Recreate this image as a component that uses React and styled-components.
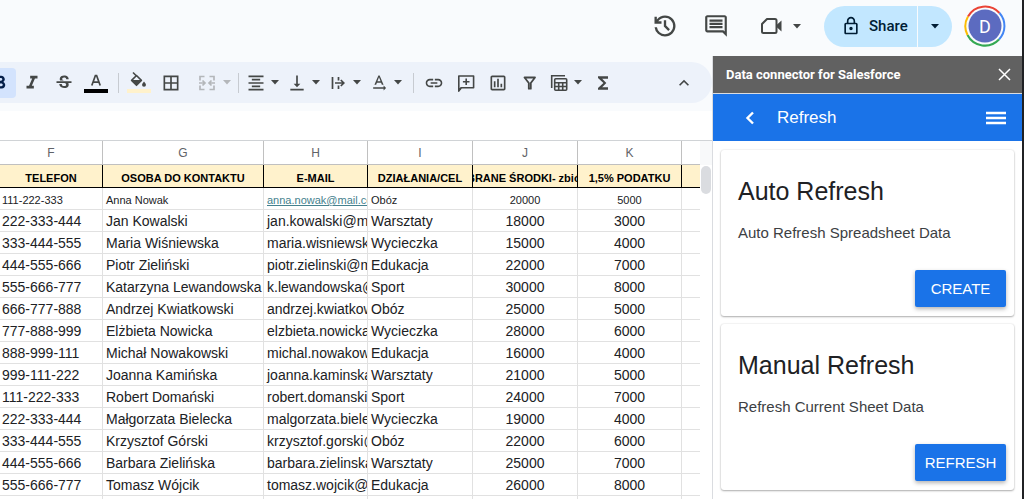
import styled, { createGlobalStyle } from 'styled-components';
import {
  MdBorderAll,
  MdFormatAlignCenter,
  MdFormatBold,
  MdFormatItalic,
  MdFunctions,
  MdKeyboardArrowUp,
  MdLink,
  MdOutlineInsertChartOutlined,
  MdOutlineInsertComment,
  MdOutlineLock,
  MdStrikethroughS,
  MdTextRotationNone,
  MdVerticalAlignBottom,
} from 'react-icons/md';

const columns = [
  { letter: 'F', title: 'TELEFON', width: 103 },
  { letter: 'G', title: 'OSOBA DO KONTAKTU', width: 161 },
  { letter: 'H', title: 'E-MAIL', width: 104 },
  { letter: 'I', title: 'DZIAŁANIA/CEL', width: 105 },
  { letter: 'J', title: 'ZEBRANE ŚRODKI- zbiórka', width: 105 },
  { letter: 'K', title: '1,5% PODATKU', width: 104 },
  { letter: '', title: '' },
];

const rows = [
  ['111-222-333', 'Anna Nowak', 'anna.nowak@mail.com', 'Obóz', 20000, 5000],
  ['222-333-444', 'Jan Kowalski', 'jan.kowalski@mail.com', 'Warsztaty', 18000, 3000],
  ['333-444-555', 'Maria Wiśniewska', 'maria.wisniewska@mail.com', 'Wycieczka', 15000, 4000],
  ['444-555-666', 'Piotr Zieliński', 'piotr.zielinski@mail.com', 'Edukacja', 22000, 7000],
  ['555-666-777', 'Katarzyna Lewandowska', 'k.lewandowska@mail.com', 'Sport', 30000, 8000],
  ['666-777-888', 'Andrzej Kwiatkowski', 'andrzej.kwiatkowski@mail.com', 'Obóz', 25000, 5000],
  ['777-888-999', 'Elżbieta Nowicka', 'elzbieta.nowicka@mail.com', 'Wycieczka', 28000, 6000],
  ['888-999-111', 'Michał Nowakowski', 'michal.nowakowski@mail.com', 'Edukacja', 16000, 4000],
  ['999-111-222', 'Joanna Kamińska', 'joanna.kaminska@mail.com', 'Warsztaty', 21000, 5000],
  ['111-222-333', 'Robert Domański', 'robert.domanski@mail.com', 'Sport', 24000, 7000],
  ['222-333-444', 'Małgorzata Bielecka', 'malgorzata.bielecka@mail.com', 'Wycieczka', 19000, 4000],
  ['333-444-555', 'Krzysztof Górski', 'krzysztof.gorski@mail.com', 'Obóz', 22000, 6000],
  ['444-555-666', 'Barbara Zielińska', 'barbara.zielinska@mail.com', 'Warsztaty', 25000, 7000],
  ['555-666-777', 'Tomasz Wójcik', 'tomasz.wojcik@mail.com', 'Edukacja', 26000, 8000],
  ['', '', '', '', '', ''],
];

const HistoryIcon = () => (
  <svg width="28" height="28" viewBox="0 -960 960 960" fill="currentColor">
    <path d="M480-120q-138 0-240.5-91.5T122-440h82q14 104 92.5 172T480-200q117 0 198.5-81.5T760-480q0-117-81.5-198.5T480-760q-69 0-129 32t-101 88h110v80H120v-240h80v94q51-64 124.5-99T480-840q75 0 140.5 28.5t114 77q48.5 48.5 77 114T840-480q0 75-28.5 140.5t-77 114q-48.5 48.5-114 77T480-120Zm112-192L440-464v-216h80v184l128 128-56 56Z" />
  </svg>
);

const MeetIcon = () => (
  <svg width="22" height="18" viewBox="0 0 22 18" fill="none">
    <path
      d="M7 2h8q1.500 0 1.500 1.500v11q0 1.500-1.500 1.500H3.500Q2 16 2 14.500V7z"
      stroke="currentColor"
      strokeWidth="2"
      strokeLinejoin="round"
    />
    <path d="M16 8.500l5.500-5v11l-5.500-5z" fill="currentColor" />
  </svg>
);

const TextColorIcon = () => (
  <svg width="24" height="24" viewBox="0 0 24 24">
    <path
      d="M7.800 14.500L11.400 4.500h1.200l3.600 10M9.200 11.200h5.600"
      fill="none"
      stroke="currentColor"
      strokeWidth="1.700"
    />
    <rect y="18" width="24" height="4" fill="#000" />
  </svg>
);

const FillColorIcon = () => (
  <svg width="24" height="24" viewBox="0 0 24 24">
    <path d="M6 1.500l3.500 3.500" stroke="currentColor" strokeWidth="1.600" />
    <path
      d="M9.500 4.500L4.600 9.400l4.900 4.900 4.900-4.900z"
      fill="none"
      stroke="currentColor"
      strokeWidth="1.600"
      strokeLinejoin="round"
    />
    <path d="M4.600 9h9.800l-4.900 5.300z" fill="currentColor" />
    <path d="M17 10.500q2 2.300 2 3.300a2 2 0 0 1-4 0q0-1 2-3.300z" fill="currentColor" />
    <rect y="18" width="24" height="4" fill="#fff2cc" />
  </svg>
);

const MergeIcon = () => (
  <svg width="24" height="24" viewBox="0 0 24 24" fill="none" stroke="currentColor" strokeWidth="1.700">
    <path d="M9.500 5.500H5v4M5 14.500v4h4.500M14.500 5.500H19v4M19 14.500v4h-4.500" />
    <path d="M4 12h6M7.500 9.500L10 12l-2.500 2.500M20 12h-6M16.500 9.500L14 12l2.500 2.500" />
  </svg>
);

const OverflowIcon = () => (
  <svg width="24" height="24" viewBox="0 0 24 24" fill="none" stroke="currentColor" strokeWidth="1.700">
    <path d="M6.500 6v12M12.500 6v3.500M12.500 14.500V18M9 12h8.500M14.800 9l3 3-3 3" />
  </svg>
);

const CommentPlusIcon = () => (
  <svg width="24" height="24" viewBox="0 0 24 24" fill="none" stroke="currentColor" strokeWidth="1.600">
    <path d="M4.800 20V5h14.800v11.800H7z" strokeLinejoin="round" />
    <path d="M4 17.500h4L4 21z" fill="currentColor" stroke="none" />
    <path d="M12.200 7.500v6.600M8.900 10.800h6.600" />
  </svg>
);

const FilterIcon = () => (
  <svg width="24" height="24" viewBox="0 0 24 24" fill="none" stroke="currentColor" strokeWidth="1.800">
    <path d="M6.500 6.500h10.500l-4.200 5.500v5.700h-2V12z" strokeLinejoin="round" />
  </svg>
);

const TableViewsIcon = () => (
  <svg width="24" height="24" viewBox="0 0 24 24" fill="none" stroke="currentColor" strokeWidth="1.600">
    <path d="M4.700 17V4.800H18" />
    <rect x="7.700" y="7.800" width="12" height="11.500" rx="1" />
    <path d="M7.700 11.800h12M7.700 15.500h12M11.700 11.800v7.500M15.700 11.800v7.500" />
  </svg>
);

const Caret = () => (
  <CaretSvg viewBox="0 0 10 5">
    <path d="M1 0h8L5 4.500z" fill="currentColor" />
  </CaretSvg>
);

const AvatarRing = () => (
  <svg width="42" height="42" viewBox="0 0 42 42" fill="none" strokeWidth="2">
    <path d="M4 11.500A19.500 19.500 0 0 1 35.500 8" stroke="#ea4335" />
    <path d="M35.500 8A19.500 19.500 0 0 1 35 34.500" stroke="#4285f4" />
    <path d="M35 34.500A19.500 19.500 0 0 1 3.500 30" stroke="#34a853" />
    <path d="M3.500 30A19.500 19.500 0 0 1 4 11.500" stroke="#fbbc04" />
    <circle cx="21" cy="21" r="16.500" fill="#5c6bc0" />
  </svg>
);

const MenuButton = ({ label, icon, wide, disabled }) => (
  <DropButton type="button" aria-label={label} $wide={wide} disabled={disabled}>
    {icon}
    <Caret />
  </DropButton>
);

const Toolbar = () => (
  <ToolbarArea role="toolbar">
    <BoldButton type="button" aria-label="Bold">
      <MdFormatBold size={22} />
    </BoldButton>
    <ToolButton type="button" aria-label="Italic">
      <MdFormatItalic size={22} />
    </ToolButton>
    <ToolButton type="button" aria-label="Strikethrough">
      <MdStrikethroughS size={20} />
    </ToolButton>
    <ToolButton type="button" aria-label="Text color">
      <TextColorIcon />
    </ToolButton>
    <Divider />
    <ToolButton type="button" aria-label="Fill color">
      <FillColorIcon />
    </ToolButton>
    <ToolButton type="button" aria-label="Borders">
      <MdBorderAll size={20} />
    </ToolButton>
    <MenuButton label="Merge cells" icon={<MergeIcon />} wide disabled />
    <Divider />
    <MenuButton label="Horizontal align" icon={<MdFormatAlignCenter size={20} />} />
    <MenuButton label="Vertical align" icon={<MdVerticalAlignBottom size={20} />} />
    <MenuButton label="Text wrapping" icon={<OverflowIcon />} />
    <MenuButton label="Text rotation" icon={<MdTextRotationNone size={20} />} />
    <Divider />
    <ToolButton type="button" aria-label="Insert link">
      <MdLink size={20} />
    </ToolButton>
    <ToolButton type="button" aria-label="Insert comment">
      <CommentPlusIcon />
    </ToolButton>
    <ToolButton type="button" aria-label="Insert chart">
      <MdOutlineInsertChartOutlined size={20} />
    </ToolButton>
    <ToolButton type="button" aria-label="Create a filter">
      <FilterIcon />
    </ToolButton>
    <MenuButton label="Table views" icon={<TableViewsIcon />} />
    <ToolButton type="button" aria-label="Functions">
      <MdFunctions size={20} />
    </ToolButton>
    <CollapseButton type="button" aria-label="Hide the menus">
      <MdKeyboardArrowUp size={20} />
    </CollapseButton>
  </ToolbarArea>
);

const Sheet = () => (
  <SheetArea>
    <GridPane>
      <Grid>
        <colgroup>
          {columns.map((column) => (
            <Col key={column.letter} $width={column.width} />
          ))}
        </colgroup>
        <thead>
          <tr>
            {columns.map((column) => (
              <Letter key={column.letter}>{column.letter}</Letter>
            ))}
          </tr>
          <tr>
            {columns.map((column) => (
              <Title key={column.letter}>
                <TitleText>
                  <span>{column.title}</span>
                </TitleText>
              </Title>
            ))}
          </tr>
        </thead>
        <tbody>
          {rows.map((row, index) => (
            <tr key={index}>
              {row.map((value, i) => (
                <Cell key={i} $small={index === 0} $center={i > 3}>
                  {index === 0 && i === 2 ? (
                    <MailLink href={`mailto:${value}`}>{value}</MailLink>
                  ) : (
                    value
                  )}
                </Cell>
              ))}
              <Cell />
            </tr>
          ))}
        </tbody>
      </Grid>
    </GridPane>
    <ScrollTrack>
      <ScrollCorner />
      <ScrollThumb />
    </ScrollTrack>
  </SheetArea>
);

const ActionCard = ({ title, text, action }) => (
  <Card>
    <CardTitle>{title}</CardTitle>
    <CardText>{text}</CardText>
    <CardButton type="button">{action}</CardButton>
  </Card>
);

const App = () => (
  <Page>
    <GlobalStyle />
    <TopBar>
      <IconButton type="button" aria-label="Version history">
        <HistoryIcon />
      </IconButton>
      <IconButton type="button" aria-label="Comments">
        <MdOutlineInsertComment size={26} />
      </IconButton>
      <MeetButton type="button" aria-label="Meet">
        <MeetIcon />
        <Caret />
      </MeetButton>
      <ShareGroup>
        <ShareButton type="button">
          <MdOutlineLock size={20} />
          Share
        </ShareButton>
        <ShareMore type="button" aria-label="Share options">
          <Caret />
        </ShareMore>
      </ShareGroup>
      <Account type="button" aria-label="Account">
        <AvatarRing />
        <Initial>D</Initial>
      </Account>
    </TopBar>
    <Body>
      <Main>
        <Toolbar />
        <FormulaBar />
        <Sheet />
      </Main>
      <Sidebar>
        <SidebarHeader>
          Data connector for Salesforce
          <PlainButton type="button" aria-label="Close">
            <svg width="13" height="13" viewBox="0 0 13 13" stroke="currentColor" strokeWidth="1.500">
              <path d="M1 1l11 11M12 1L1 12" />
            </svg>
          </PlainButton>
        </SidebarHeader>
        <SidebarNav>
          <PlainButton type="button" aria-label="Back">
            <svg width="10" height="14" viewBox="0 0 10 14" fill="none" stroke="currentColor" strokeWidth="2.400">
              <path d="M8 1.500L2.500 7 8 12.500" />
            </svg>
          </PlainButton>
          <NavTitle>Refresh</NavTitle>
          <PlainButton type="button" aria-label="Menu">
            <svg width="20" height="14" viewBox="0 0 20 14" stroke="currentColor" strokeWidth="2.400">
              <path d="M0 2h20M0 7h20M0 12h20" />
            </svg>
          </PlainButton>
        </SidebarNav>
        <Cards>
          <ActionCard title="Auto Refresh" text="Auto Refresh Spreadsheet Data" action="CREATE" />
          <ActionCard title="Manual Refresh" text="Refresh Current Sheet Data" action="REFRESH" />
        </Cards>
      </Sidebar>
    </Body>
  </Page>
);

export default App;

const GlobalStyle = createGlobalStyle`
  * {
    box-sizing: border-box;
  }
  body {
    margin: 0;
    font-family: 'Liberation Sans', Arial, sans-serif;
    color: #202124;
  }
  button {
    font: inherit;
    color: inherit;
    background: none;
    border: none;
    padding: 0;
    cursor: pointer;
  }
`;

const Page = styled.div`
  height: 100vh;
  display: flex;
  flex-direction: column;
  overflow: hidden;
  background-color: #f9fbfd;
  border-right: 2px solid #202124;
`;

const TopBar = styled.header`
  flex: none;
  height: 56px;
  padding: 0 16px 4px 0;
  display: flex;
  align-items: center;
  justify-content: flex-end;
  color: #444746;
`;

const IconButton = styled.button`
  height: 32px;
  margin-right: 24px;
  display: flex;
  align-items: center;
`;

const MeetButton = styled(IconButton)`
  gap: 10px;
  margin-right: 22px;
  padding-left: 7px;
`;

const CaretSvg = styled.svg`
  flex: none;
  width: 10px;
  height: 5px;
`;

const ShareGroup = styled.div`
  display: flex;
  gap: 1px;
  height: 41px;
  margin-right: 12px;
  border-radius: 21px;
  overflow: hidden;
  color: #001d35;
`;

const ShareButton = styled.button`
  width: 93px;
  display: flex;
  align-items: center;
  gap: 8px;
  padding-left: 17px;
  background-color: #c2e7ff;
  font-family: Roboto, sans-serif;
  font-size: 15px;
  font-weight: 500;
`;

const ShareMore = styled.button`
  width: 34px;
  display: flex;
  align-items: center;
  justify-content: center;
  background-color: #c2e7ff;
`;

const Account = styled.button`
  display: grid;
  place-items: center;

  > * {
    grid-area: 1 / 1;
  }
`;

const Initial = styled.span`
  color: #fff;
  font-family: Roboto, sans-serif;
  font-size: 18px;
`;

const Body = styled.div`
  flex: 1;
  min-height: 0;
  display: flex;
`;

const Main = styled.main`
  flex: 1;
  min-width: 0;
  display: flex;
  flex-direction: column;
  padding-top: 6px;
  overflow: hidden;
`;

const ToolbarArea = styled.div`
  flex: none;
  display: flex;
  align-items: center;
  height: 41px;
  border-radius: 0 21px 21px 0;
  background-color: #edf2fa;
  color: #444746;
`;

const ToolButton = styled.button`
  flex: none;
  width: 32px;
  height: 30px;
  display: flex;
  align-items: center;
  justify-content: center;
`;

const BoldButton = styled(ToolButton)`
  margin-left: -16px;
  border-radius: 4px;
  background-color: #d3e3fd;
  color: #041e49;
`;

const CollapseButton = styled(ToolButton)`
  margin: 0 12px 0 auto;
`;

const DropButton = styled.button`
  flex: none;
  width: ${(props) => (props.$wide ? '45px' : '41px')};
  height: 30px;
  display: flex;
  align-items: center;
  justify-content: ${(props) => (props.$wide ? 'flex-end' : 'flex-start')};
  color: ${(props) => (props.disabled ? '#b4b7ba' : 'inherit')};

  > :first-child {
    flex: none;
    width: ${(props) => (props.$wide ? '24px' : '26px')};
    margin-right: ${(props) => (props.$wide ? '3px' : '1px')};
  }
`;

const Divider = styled.span`
  flex: none;
  width: 1px;
  height: 20px;
  margin: 0 4px 0 6px;
  background-color: #c7cbd1;
`;

const FormulaBar = styled.div`
  flex: none;
  height: 29px;
  margin-top: 8px;
  background-color: #fff;
`;

const SheetArea = styled.div`
  flex: 1;
  min-height: 0;
  display: flex;
  overflow: hidden;
  background-color: #fff;
  border-top: 1px solid #d0d3d6;
`;

const GridPane = styled.div`
  flex: 1;
  min-width: 0;
  overflow: hidden;
`;

const Grid = styled.table`
  width: 100%;
  table-layout: fixed;
  border-spacing: 0;
`;

const Col = styled.col`
  width: ${(props) => (props.$width ? `${props.$width}px` : 'auto')};
`;

const Letter = styled.th`
  height: 24px;
  padding: 0;
  border-right: 1px solid #c0c0c0;
  border-bottom: 1px solid #c0c0c0;
  color: #5f6368;
  font-size: 12px;
  font-weight: 400;

  &:last-child {
    border-right: none;
  }
`;

const Title = styled.th`
  height: 23px;
  padding: 0;
  border-right: 1px solid #000;
  border-bottom: 1px solid #000;
  background-color: #fff2cc;
  color: #000;
  font-size: 11px;
  line-height: 14px;
  vertical-align: bottom;

  &:last-child {
    border-right: none;
  }
`;

const TitleText = styled.div`
  display: flex;
  justify-content: center;
  overflow: hidden;
  white-space: nowrap;
  padding-bottom: 2px;
`;

const Cell = styled.td`
  height: 22px;
  padding: ${(props) => (props.$center ? '0' : '0 0 0 3px')};
  overflow: hidden;
  white-space: nowrap;
  vertical-align: bottom;
  border-right: 1px solid #e1e1e1;
  border-bottom: 1px solid #e1e1e1;
  font-size: ${(props) => (props.$small ? '11px' : '14px')};
  line-height: ${(props) => (props.$small ? '17px' : '19px')};
  text-align: ${(props) => (props.$center ? 'center' : 'left')};

  &:first-child {
    padding-left: 2px;
  }

  &:last-child {
    border-right: none;
  }
`;

const MailLink = styled.a`
  color: #45818e;
`;

const ScrollTrack = styled.div`
  flex: none;
  width: 12px;
  padding: 0 1px;
`;

const ScrollCorner = styled.div`
  height: 24px;
  margin: 0 -1px 1px;
  background-color: #f8f9fa;
`;

const ScrollThumb = styled.div`
  height: 28px;
  border-radius: 5px;
  background-color: #dadce0;
`;

const Sidebar = styled.aside`
  flex: none;
  width: 310px;
  display: flex;
  flex-direction: column;
  border-left: 1px solid #dadce0;
  background-color: #fff;
`;

const SidebarHeader = styled.div`
  flex: none;
  display: flex;
  align-items: center;
  justify-content: space-between;
  height: 38px;
  padding: 0 11px 0 13px;
  border-bottom: 1px solid #dadce0;
  background-color: #616161;
  color: #fff;
  font-family: Roboto, sans-serif;
  font-size: 13px;
  font-weight: 700;
`;

const SidebarNav = styled.nav`
  flex: none;
  display: flex;
  align-items: center;
  height: 47px;
  padding: 0 16px 0 32px;
  background-color: #1a73e8;
  color: #fff;
`;

const PlainButton = styled.button`
  display: flex;
`;

const NavTitle = styled.span`
  flex: 1;
  margin-left: 22px;
  font-size: 17px;
`;

const Cards = styled.div`
  flex: 1;
  display: flex;
  flex-direction: column;
  gap: 8px;
  padding: 9px 8px;
`;

const Card = styled.section`
  display: flex;
  flex-direction: column;
  height: 166px;
  padding: 24px 8px 9px 17px;
  border-radius: 3px;
  background-color: #fff;
  box-shadow: 0 1px 2px rgba(0, 0, 0, 0.3), 0 0 2px rgba(0, 0, 0, 0.12);
`;

const CardTitle = styled.h2`
  margin: 0 0 16px;
  font-size: 25px;
  line-height: 34px;
  font-weight: 400;
`;

const CardText = styled.p`
  margin: 0;
  color: #3c4043;
  font-size: 15px;
  line-height: 18px;
`;

const CardButton = styled.button`
  width: 91px;
  height: 37px;
  margin: auto 0 0 auto;
  border-radius: 2px;
  background-color: #1a73e8;
  color: #fff;
  font-size: 15px;
  box-shadow: 0 2px 4px rgba(0, 0, 0, 0.3);
`;
